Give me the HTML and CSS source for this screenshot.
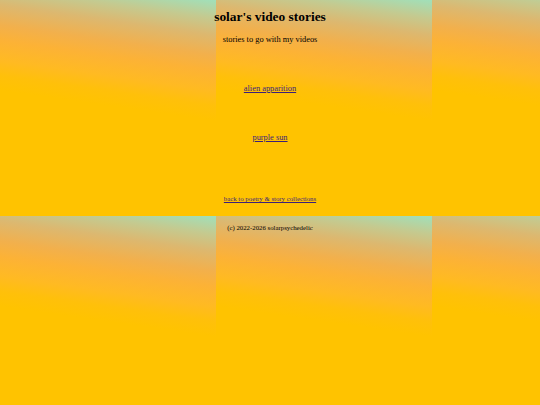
FILE: index.html
```html
<!DOCTYPE html>
<html lang="en">
<head>
<meta charset="utf-8">
<title>solar's video stories</title>
<link rel="stylesheet" href="styles.css">
</head>
<body>
<main class="page">
  <h1 class="title">solar's video stories</h1>
  <p class="subtitle">stories to go with my videos</p>
  <p class="story"><a href="#">alien apparition</a></p>
  <p class="story"><a href="#">purple sun</a></p>
  <p class="back"><a href="#">back to poetry &amp; story collections</a></p>
  <p class="footer">(c) 2022-2026 solarpsychedelic</p>
</main>
</body>
</html>
```
FILE: styles.css
```css
html, body {
  margin: 0;
  padding: 0;
  height: 100%;
}
body {
  font-family: "Liberation Serif", "Times New Roman", serif;
  color: #000;
  background-color: #ffc300;
  background-image: linear-gradient(188deg, #a0e0ba 0%, #c4ca90 7.4%, #dcb870 14.3%, #f2b04c 22.5%, #fcb236 28.7%, #ffba22 36.9%, #ffc00a 43%, #ffc300 49%, #ffc300 100%);
  background-size: 216px 216px;
  background-repeat: repeat;
}
.page {
  text-align: center;
  padding-top: 8px;
}
.title {
  margin: 0;
  font-size: 13.4px;
  line-height: 18px;
  font-weight: bold;
}
.subtitle {
  margin: 8px 0 0;
  font-size: 8.4px;
  line-height: 12px;
}
.story {
  margin: 37px 0 0;
  font-size: 8.4px;
  line-height: 12px;
}
.back {
  margin: 50px 0 0;
  font-size: 6.8px;
  line-height: 10px;
}
.footer {
  margin: 19px 0 0;
  font-size: 6.8px;
  line-height: 10px;
}
a {
  color: #3b1f7a;
}
```
